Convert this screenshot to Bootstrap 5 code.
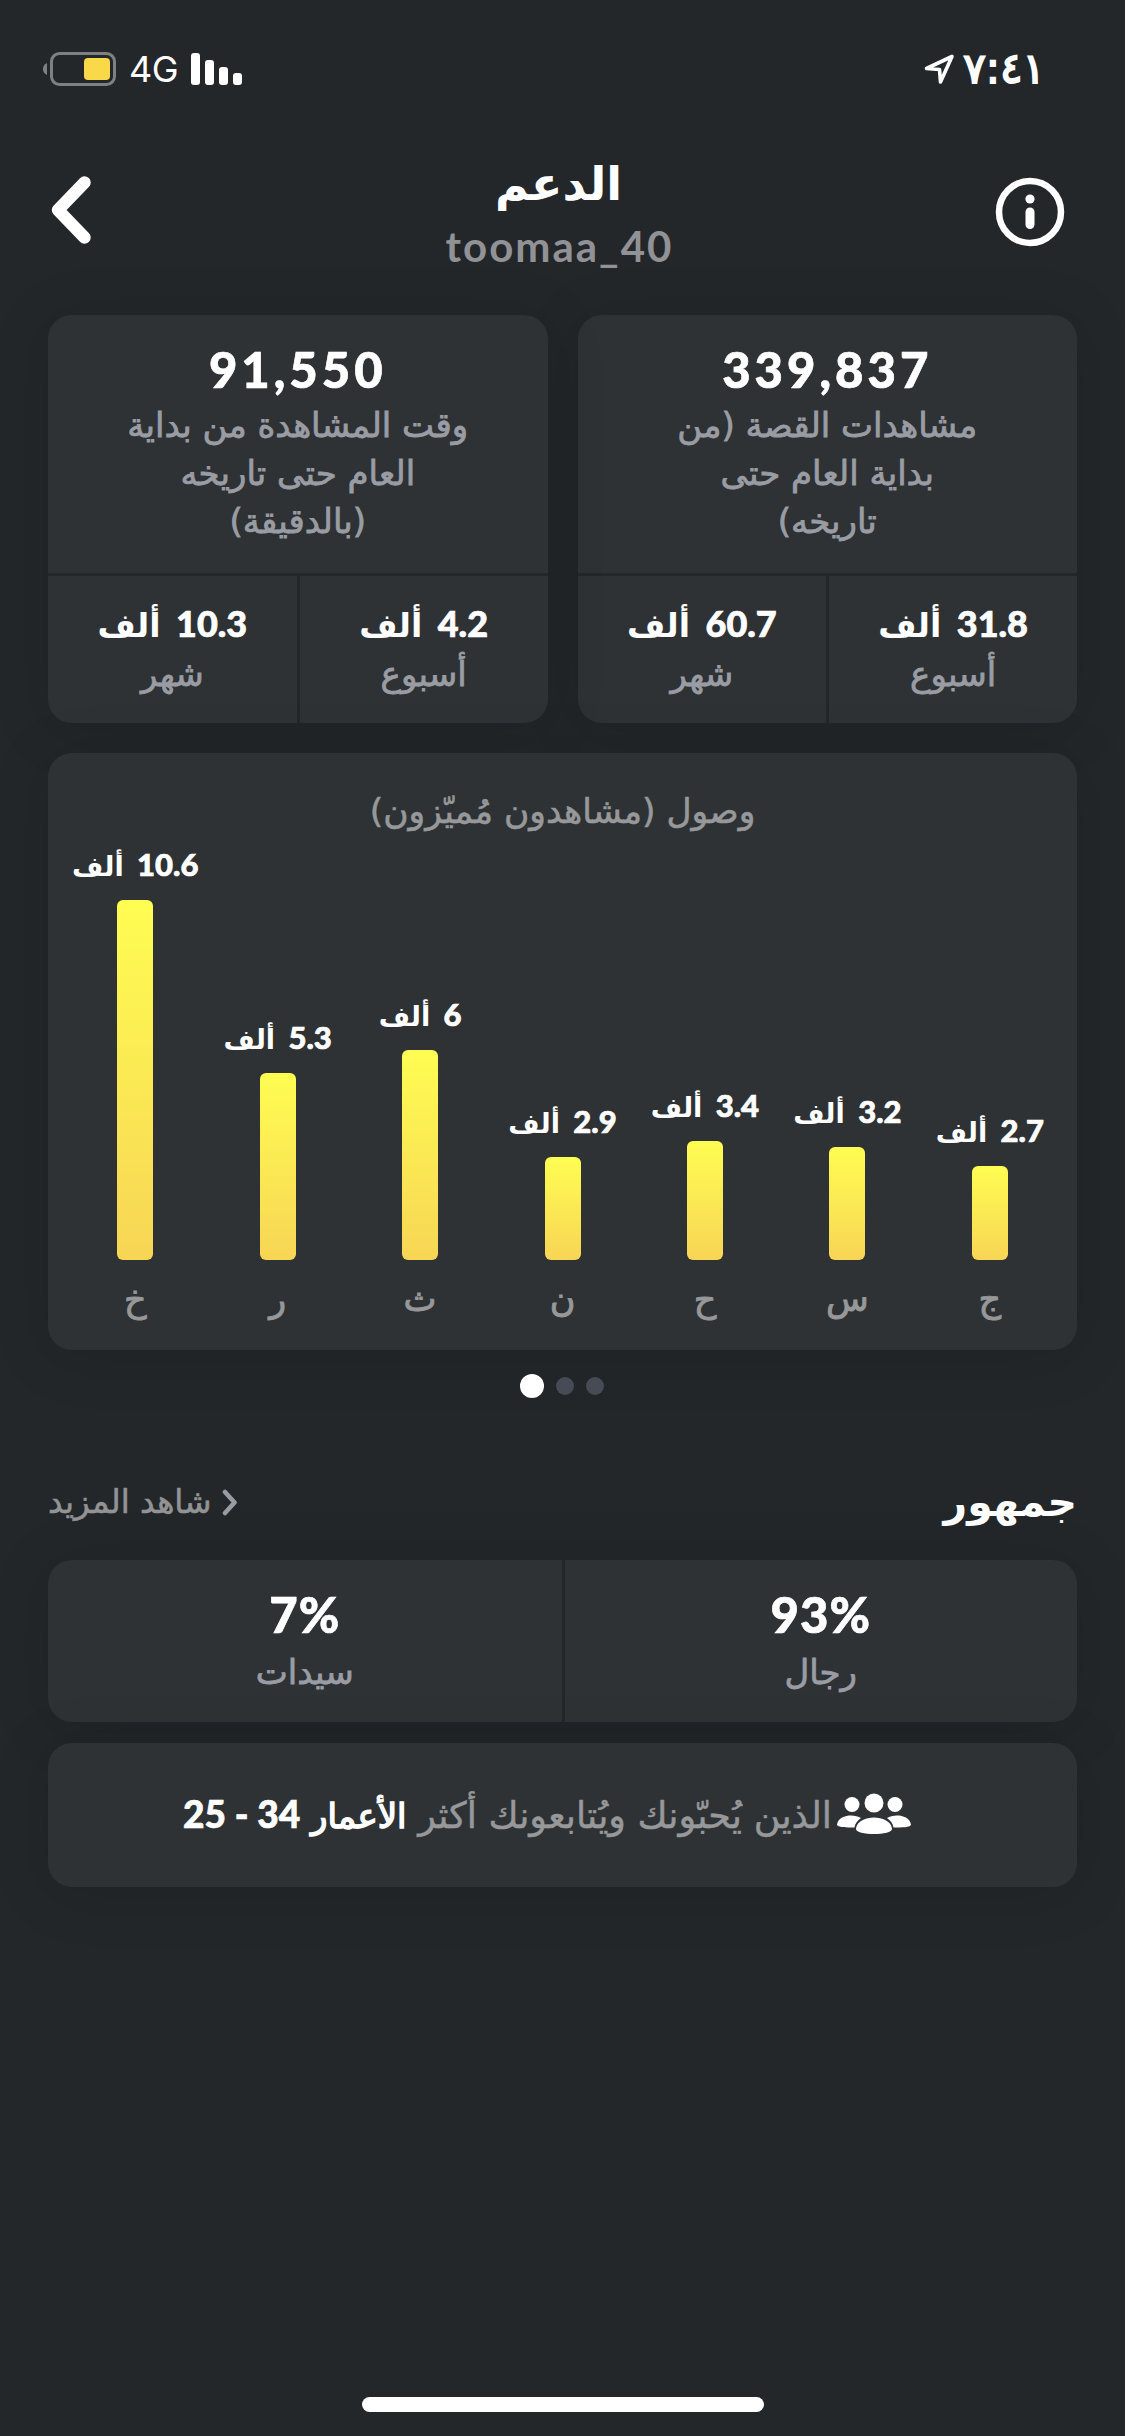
<!DOCTYPE html>
<html lang="ar" dir="rtl">
<head>
<meta charset="utf-8">
<meta name="viewport" content="width=device-width, initial-scale=1">
<title>الدعم</title>
<link href="https://cdn.jsdelivr.net/npm/bootstrap@5.3.0/dist/css/bootstrap.min.css" rel="stylesheet">
<style>
body{background:#23272a;color:#fff;width:1125px;height:2436px;overflow:hidden;font-family:"DejaVu Sans",sans-serif;font-size:30px;margin:0}
svg{display:block}
.num{font-family:Lato,"DejaVu Sans",sans-serif;font-weight:900;letter-spacing:2.5px;-webkit-text-stroke:.7px currentColor}
.status{height:138px;padding:0 80px 0 43px}
.clock{font-size:42px;font-weight:400;line-height:44px;-webkit-text-stroke:1.8px currentColor}
.net{font-family:Inter,sans-serif;font-size:36px;line-height:44px;letter-spacing:-.5px;margin:0 13px 0 12px}
.top{height:177px;padding:13px 58px 0 50px}
.top svg{margin-top:26px;margin-right:2px}
.top .back{margin:25px 0 0 1px}
.top-side{width:75px}
.top-title{font-size:46px;font-weight:700;line-height:67px}
.handle{font-family:Lato,sans-serif;font-weight:700;font-size:42px;line-height:50px;letter-spacing:2px;color:#919295;padding:3px 0 0 2px}
.page{padding:0 48px}
.panel{background:#2e3235;border-radius:24px;box-shadow:0 6px 60px rgba(10,10,15,.13);overflow:hidden}
.duo{gap:30px}
.lead-cell{height:261px;padding-top:27px;border-bottom:3px solid #23272a}
.big-num{font-size:49px;line-height:54px;letter-spacing:4px}
.caption-text{color:#9a9ca4;font-size:34px;line-height:48px;-webkit-text-stroke:.8px currentColor}
.lead-cell .caption-text{padding-top:5px}
.cell{flex:1 1 0}
.rule-e{flex:0 0 calc(50% + 1px);border-left:3px solid #23272a}
.small-cell{height:147px;padding-top:22px}
.mid-num{font-size:33px;line-height:50px;font-weight:700}
.mid-num .num{font-size:36px;letter-spacing:4px;margin-left:4px}
.small-cell .caption-text{margin-top:-1px}
.chart{height:597px;margin-top:30px;padding:31px 16px 0}
.chart-title{color:#97989a;font-size:34.500px;line-height:54px;margin-bottom:2px;-webkit-text-stroke:.6px currentColor}
.plot{height:420px}
.bar-col{width:142.7px}
.bar-val{font-size:27px;line-height:36px;font-weight:700;white-space:nowrap;margin-bottom:15px}
.bar-val .num{font-size:31px;letter-spacing:3.500px;margin-left:4px}
.bar-fill{width:36px;border-radius:6px;background:linear-gradient(#fffd52,#f7d555)}
.bar-day{color:#97989a;font-size:35px;line-height:50px;margin-top:14px;-webkit-text-stroke:.9px currentColor}
.dots{height:24px;margin-top:24px;gap:12px;padding-right:1px}
.dot{width:18px;height:18px;border-radius:50%;background:#464b56}
.dot.on{width:24px;height:24px;background:#fff}
.sec{height:162px;padding-top:74px}
.sec-title{font-size:41px;font-weight:700;line-height:60px}
.more{color:#929395;font-size:32.500px;line-height:60px;gap:11px;-webkit-text-stroke:.6px currentColor}
.aud{height:162px}
.aud-cell{padding-top:27px}
.aud-cell .num{letter-spacing:1px}
.aud-cell .caption-text{padding-top:7px}
.fans{height:144px;margin-top:21px;padding:0 165px 0 0;gap:4px}
.fans-text{color:#97989a;font-size:36.500px;line-height:50px;white-space:nowrap;-webkit-text-stroke:.5px currentColor}
.fans-text b{color:#fff;font-size:34px;font-weight:400;-webkit-text-stroke:1.5px currentColor}
.fans-text .num{font-size:37px;letter-spacing:1.2px}
.home{width:402px;height:15px;border-radius:8px;background:#fff;margin-bottom:24px}
</style>
<script src="https://cdn.jsdelivr.net/npm/bootstrap@5.3.0/dist/js/bootstrap.bundle.min.js"></script>
</head>
<body class="d-flex flex-column">
<header class="status d-flex justify-content-between align-items-center">
  <div class="d-flex align-items-center gap-2">
    <span class="clock">٧:٤١</span>
    <svg width="31" height="31" viewBox="0 0 31 31" fill="none" stroke="#fff" stroke-width="3.6" stroke-linejoin="round"><path d="M28 2.5 2.5 14.5 15.5 15.5 16.5 28Z"/></svg>
  </div>
  <div class="d-flex align-items-center" dir="ltr">
    <svg width="74" height="34" viewBox="0 0 74 34"><path d="M4 11v12C1 21.500 0 19.500 0 17s1-4.500 4-6Z" fill="#7e8082"/><rect x="8.500" y="1.500" width="63" height="31" rx="8" fill="none" stroke="#7e8082" stroke-width="3"/><rect x="41" y="6" width="26" height="22" rx="4" fill="#f9d84a"/></svg>
    <span class="net">4G</span>
    <svg width="52" height="32" viewBox="0 0 52 32" fill="#fff"><rect width="9" height="32" rx="3"/><rect x="14" y="7" width="9" height="25" rx="3"/><rect x="28" y="14" width="9" height="18" rx="3"/><rect x="42" y="20" width="9" height="12" rx="3"/></svg>
  </div>
</header>
<nav class="top d-flex justify-content-between align-items-start">
  <div class="top-side"><svg width="70" height="70" viewBox="0 0 70 70" fill="none" stroke="#fff"><circle cx="35" cy="35" r="31" stroke-width="6.500"/><circle cx="35" cy="22" r="4.600" fill="#fff" stroke="none"/><path d="M35 35v12.500" stroke-width="9" stroke-linecap="round"/></svg></div>
  <div class="text-center">
    <div class="top-title">الدعم</div>
    <div class="handle" dir="ltr">toomaa_40</div>
  </div>
  <div class="top-side" dir="ltr"><svg class="back" width="40" height="68" viewBox="0 0 40 68" fill="none" stroke="#fff" stroke-width="12.500" stroke-linecap="round" stroke-linejoin="round"><path d="M33.500 6.500 7 34 33.500 61.500"/></svg></div>
</nav>
<main class="page flex-grow-1 d-flex flex-column">
  <section class="duo d-flex text-center">
    <div class="panel w-50">
      <div class="lead-cell"><div class="num big-num">339,837</div><div class="caption-text">مشاهدات القصة (من<br>بداية العام حتى<br>تاريخه)</div></div>
      <div class="d-flex">
        <div class="small-cell rule-e"><div class="mid-num"><span class="num">31.8</span> ألف</div><div class="caption-text">أسبوع</div></div>
        <div class="small-cell cell"><div class="mid-num"><span class="num">60.7</span> ألف</div><div class="caption-text">شهر</div></div>
      </div>
    </div>
    <div class="panel w-50">
      <div class="lead-cell"><div class="num big-num">91,550</div><div class="caption-text">وقت المشاهدة من بداية<br>العام حتى تاريخه<br>(بالدقيقة)</div></div>
      <div class="d-flex">
        <div class="small-cell rule-e"><div class="mid-num"><span class="num">4.2</span> ألف</div><div class="caption-text">أسبوع</div></div>
        <div class="small-cell cell"><div class="mid-num"><span class="num">10.3</span> ألف</div><div class="caption-text">شهر</div></div>
      </div>
    </div>
  </section>
  <section class="panel chart text-center">
    <div class="chart-title">وصول (مشاهدون مُميّزون)</div>
    <div class="plot d-flex align-items-end justify-content-center">
      <div class="bar-col d-flex flex-column align-items-center"><div class="bar-val"><span class="num">2.7</span> ألف</div><div class="bar-fill" style="height:94px"></div></div>
      <div class="bar-col d-flex flex-column align-items-center"><div class="bar-val"><span class="num">3.2</span> ألف</div><div class="bar-fill" style="height:113px"></div></div>
      <div class="bar-col d-flex flex-column align-items-center"><div class="bar-val"><span class="num">3.4</span> ألف</div><div class="bar-fill" style="height:119px"></div></div>
      <div class="bar-col d-flex flex-column align-items-center"><div class="bar-val"><span class="num">2.9</span> ألف</div><div class="bar-fill" style="height:103px"></div></div>
      <div class="bar-col d-flex flex-column align-items-center"><div class="bar-val"><span class="num">6</span> ألف</div><div class="bar-fill" style="height:210px"></div></div>
      <div class="bar-col d-flex flex-column align-items-center"><div class="bar-val"><span class="num">5.3</span> ألف</div><div class="bar-fill" style="height:187px"></div></div>
      <div class="bar-col d-flex flex-column align-items-center"><div class="bar-val"><span class="num">10.6</span> ألف</div><div class="bar-fill" style="height:360px"></div></div>
    </div>
    <div class="d-flex justify-content-center bar-day">
      <span class="bar-col">ج</span><span class="bar-col">س</span><span class="bar-col">ح</span><span class="bar-col">ن</span><span class="bar-col">ث</span><span class="bar-col">ر</span><span class="bar-col">خ</span>
    </div>
  </section>
  <div class="dots d-flex justify-content-center align-items-center"><i class="dot"></i><i class="dot"></i><i class="dot on"></i></div>
  <div class="sec d-flex justify-content-between align-items-start">
    <div class="sec-title">جمهور</div>
    <div class="more d-flex align-items-center"><svg width="16" height="27" viewBox="0 0 16 27" fill="none" stroke="#9a9ca4" stroke-width="4.500" stroke-linecap="round" stroke-linejoin="round"><path d="M3 3 12.500 13.500 3 24"/></svg><span>شاهد المزيد</span></div>
  </div>
  <section class="panel aud d-flex text-center">
    <div class="aud-cell rule-e"><div class="num big-num">93%</div><div class="caption-text">رجال</div></div>
    <div class="aud-cell cell"><div class="num big-num">7%</div><div class="caption-text">سيدات</div></div>
  </section>
  <section class="panel fans d-flex align-items-center">
    <svg width="76" height="44" viewBox="0 0 76 44" fill="#fff"><circle cx="16" cy="11.500" r="7.500"/><circle cx="59" cy="11.500" r="7.500"/><circle cx="38" cy="10" r="9.500"/><path d="M1 31.500C2 25 9 22.500 15 22.500c4 0 7.500 1 10 2.500-3.500 2.500-6 5.500-6.500 9.500C11 34.500 1 34.500 1 31.500ZM75 31.500C74 25 67 22.500 61 22.500c-4 0-7.500 1-10 2.500 3.500 2.500 6 5.500 6.500 9.500 7.500 0 17.500 0 17.500-3ZM20 35.500C21 28 30 24.500 38 24.500s17 3.500 18 11c.5 4-9 5.500-18 5.500s-18.500-1.500-18-5.500Z"/></svg>
    <div class="fans-text">الذين يُحبّونك ويُتابعونك أكثر <b>الأعمار <span class="num">34 - 25</span></b></div>
  </section>
</main>
<div class="home mx-auto"></div>
</body>
</html>
